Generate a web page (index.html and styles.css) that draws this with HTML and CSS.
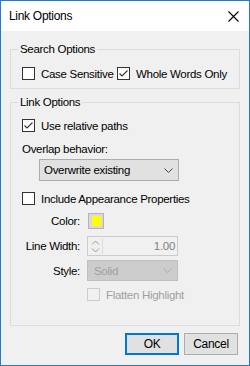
FILE: index.html
```html
<!DOCTYPE html>
<html>
  <head>
    <title>Link Options</title>
    <meta charset="UTF-8" />
    <link rel="stylesheet" href="styles.css">
  </head>
  <body>
    <div class="window">
      <div class="titlebar">
        <span class="title">Link Options</span>
        <svg class="close" width="11" height="11" viewBox="0 0 11 11">
          <path d="M0.5 0.5 L10.5 10.5 M10.5 0.5 L0.5 10.5" stroke="#000" stroke-width="1.1" fill="none" />
        </svg>
      </div>
      <div class="client">
        <fieldset class="group search">
          <legend>Search Options</legend>
          <div class="row">
            <label class="check case"><span class="box"></span>Case Sensitive</label>
            <label class="check"><span class="box"><svg width="11" height="11" viewBox="0 0 11 11"><path d="M1.5 5.5 L4 8 L9.5 2.5" stroke="#333" stroke-width="1.1" fill="none" /></svg></span>Whole Words Only</label>
          </div>
        </fieldset>
        <fieldset class="group link">
          <legend>Link Options</legend>
          <label class="check relative"><span class="box"><svg width="11" height="11" viewBox="0 0 11 11"><path d="M1.5 5.5 L4 8 L9.5 2.5" stroke="#333" stroke-width="1.1" fill="none" /></svg></span>Use relative paths</label>
          <div class="caption">Overlap behavior:</div>
          <div class="combo overlap">
            <span>Overwrite existing</span>
            <svg width="9" height="5" viewBox="0 0 9 5"><path d="M0.5 0.5 L4.5 4.5 L8.5 0.5" stroke="#444" stroke-width="1" fill="none" /></svg>
          </div>
          <label class="check include"><span class="box"></span>Include Appearance Properties</label>
          <div class="prop color">
            <span class="lbl">Color:</span>
            <span class="swatch"><span class="fill"></span></span>
          </div>
          <div class="prop width">
            <span class="lbl">Line Width:</span>
            <div class="spin">
              <div class="arrows">
                <svg width="9" height="5" viewBox="0 0 9 5"><path d="M1 4.5 L4.5 1 L8 4.5" stroke="#999" stroke-width="1" fill="none" /></svg>
                <svg width="9" height="5" viewBox="0 0 9 5"><path d="M1 0.5 L4.5 4 L8 0.5" stroke="#999" stroke-width="1" fill="none" /></svg>
              </div>
              <span class="value">1.00</span>
            </div>
          </div>
          <div class="prop style">
            <span class="lbl">Style:</span>
            <div class="combo disabled">
              <span>Solid</span>
              <svg width="9" height="5" viewBox="0 0 9 5"><path d="M0.5 0.5 L4.5 4.5 L8.5 0.5" stroke="#aaa" stroke-width="1" fill="none" /></svg>
            </div>
          </div>
          <label class="check disabled flatten"><span class="box"></span>Flatten Highlight</label>
        </fieldset>
        <div class="buttons">
          <button class="default">OK</button>
          <button>Cancel</button>
        </div>
      </div>
    </div>
  </body>
</html>
```

FILE: styles.css
```css
body {
  margin: 0;
  font-family: "Liberation Sans", Arial, sans-serif;
  font-size: 11.5px;
  letter-spacing: -0.3px;
  white-space: nowrap;
  color: #000;
}
.window {
  width: 250px;
  height: 366px;
  box-sizing: border-box;
  border: 1px solid #1c7dd6;
  background: #f0f0f0;
  display: flex;
  flex-direction: column;
}
.titlebar {
  height: 30px;
  background: #fff;
  display: flex;
  align-items: center;
  padding: 0 9px 0 8px;
}
.title {
  flex: 1;
  font-size: 12px;
}
.close {
  margin-right: 1px;
}
.client {
  padding-top: 11px;
}
.group {
  margin: 0 9px;
  padding: 0 0 0 11px;
  border: 1px solid #dcdcdc;
  min-width: 0;
}
.group legend {
  padding: 0 2px;
  margin-left: -4px;
  line-height: 14px;
}
.search {
  padding-top: 10px;
  padding-bottom: 7px;
}
.row {
  display: flex;
}
.check {
  display: flex;
  align-items: center;
  height: 15px;
}
.check .box {
  width: 11px;
  height: 11px;
  border: 1px solid #333;
  background: #fff;
  margin-right: 6px;
  display: flex;
  flex: none;
}
.check.case {
  width: 95px;
}
.check.disabled {
  color: #a0a0a0;
}
.check.disabled .box {
  border-color: #cccccc;
  background: #f0f0f0;
}
.link {
  margin-top: 6px;
  padding-bottom: 23px;
}
.relative {
  margin-top: 9px;
}
.caption {
  margin-top: 9px;
  line-height: 14px;
}
.combo {
  display: flex;
  align-items: center;
  justify-content: space-between;
  box-sizing: border-box;
  height: 22px;
  width: 140px;
  padding: 0 5px 0 4px;
  background: #e1e1e1;
  border: 1px solid #adadad;
}
.overlap {
  margin: 3px 0 0 17px;
}
.combo.disabled {
  width: 91px;
  height: 21px;
  padding-left: 6px;
  background: #cccccc;
  border-color: #bfbfbf;
  color: #a0a0a0;
}
.include {
  margin-top: 10px;
}
.prop {
  display: flex;
  align-items: center;
}
.prop .lbl {
  width: 58px;
  text-align: right;
  margin-right: 7px;
}
.color {
  margin-top: 7px;
}
.swatch {
  width: 16px;
  height: 16px;
  box-sizing: border-box;
  margin-left: 1px;
  border: 1px solid #b4b4b4;
  background: #dadada;
  display: flex;
  align-items: center;
  justify-content: center;
}
.swatch .fill {
  width: 9px;
  height: 10px;
  background: #ffff00;
}
.width {
  margin-top: 7px;
}
.spin {
  box-sizing: border-box;
  width: 91px;
  height: 20px;
  border: 1px solid #cccccc;
  background: #f0f0f0;
  display: flex;
  align-items: center;
  padding: 1px 2px 1px 1px;
}
.spin .arrows {
  width: 13px;
  height: 16px;
  border-right: 1px solid #dcdcdc;
  display: flex;
  flex-direction: column;
  align-items: center;
  justify-content: space-around;
}
.spin .value {
  flex: 1;
  text-align: right;
  color: #808080;
}
.style {
  margin-top: 4px;
}
.flatten {
  margin: 6px 0 0 65px;
}
.buttons {
  display: flex;
  justify-content: flex-end;
  gap: 5px;
  margin-top: 7px;
  padding-right: 11px;
}
.buttons button {
  width: 54px;
  height: 22px;
  font-family: inherit;
  font-size: 12px;
  letter-spacing: inherit;
  color: #000;
  background: #e1e1e1;
  border: 1px solid #adadad;
  padding: 0;
}
.buttons .default {
  border: 2px solid #0078d7;
}
```
